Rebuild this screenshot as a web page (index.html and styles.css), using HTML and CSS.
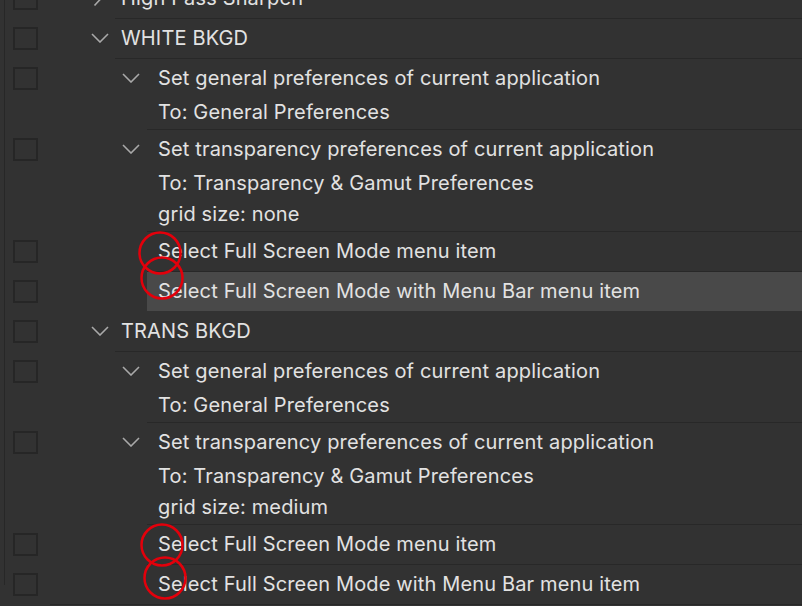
FILE: index.html
```html
<!DOCTYPE html>
<html>
<head>
<meta charset="utf-8">
<link rel="stylesheet" href="styles.css">
</head>
<body>
<div class="panel">
  <div class="list">
    <div class="row">
      <div class="gutter"><span class="box"></span></div>
      <div class="body group">
        <div class="title"><span class="chev right"><svg width="10" height="18" viewBox="0 0 10 18"><path d="M1.5 1.5 L8.5 9 L1.5 16.5" fill="none" stroke="#a9a9a9" stroke-width="1.6"/></svg></span><span class="text">High Pass Sharpen</span></div>
      </div>
    </div>

    <div class="row">
      <div class="gutter"><span class="box"></span></div>
      <div class="body group">
        <div class="title"><span class="chev"><svg width="18" height="10" viewBox="0 0 18 10"><path d="M1 1 L9 9 L17 1" fill="none" stroke="#a9a9a9" stroke-width="1.6"/></svg></span><span class="text">WHITE BKGD</span></div>
      </div>
    </div>

    <div class="row">
      <div class="gutter"><span class="box"></span></div>
      <div class="body action">
        <div class="title"><span class="chev"><svg width="18" height="10" viewBox="0 0 18 10"><path d="M1 1 L9 9 L17 1" fill="none" stroke="#a9a9a9" stroke-width="1.6"/></svg></span><span class="text">Set general preferences of current application</span></div>
        <div class="detail">To: General Preferences</div>
      </div>
    </div>

    <div class="row">
      <div class="gutter"><span class="box"></span></div>
      <div class="body action">
        <div class="title"><span class="chev"><svg width="18" height="10" viewBox="0 0 18 10"><path d="M1 1 L9 9 L17 1" fill="none" stroke="#a9a9a9" stroke-width="1.6"/></svg></span><span class="text">Set transparency preferences of current application</span></div>
        <div class="detail">To: Transparency &amp; Gamut Preferences</div>
        <div class="detail">grid size: none</div>
      </div>
    </div>

    <div class="row">
      <div class="gutter"><span class="box"></span></div>
      <div class="body action">
        <div class="title plain"><span class="text">Select Full Screen Mode menu item</span></div>
      </div>
    </div>

    <div class="row">
      <div class="gutter"><span class="box"></span></div>
      <div class="body action selected">
        <div class="title plain"><span class="text">Select Full Screen Mode with Menu Bar menu item</span></div>
      </div>
    </div>

    <div class="row">
      <div class="gutter"><span class="box"></span></div>
      <div class="body group">
        <div class="title"><span class="chev"><svg width="18" height="10" viewBox="0 0 18 10"><path d="M1 1 L9 9 L17 1" fill="none" stroke="#a9a9a9" stroke-width="1.6"/></svg></span><span class="text">TRANS BKGD</span></div>
      </div>
    </div>

    <div class="row">
      <div class="gutter"><span class="box"></span></div>
      <div class="body action">
        <div class="title"><span class="chev"><svg width="18" height="10" viewBox="0 0 18 10"><path d="M1 1 L9 9 L17 1" fill="none" stroke="#a9a9a9" stroke-width="1.6"/></svg></span><span class="text">Set general preferences of current application</span></div>
        <div class="detail">To: General Preferences</div>
      </div>
    </div>

    <div class="row">
      <div class="gutter"><span class="box"></span></div>
      <div class="body action">
        <div class="title"><span class="chev"><svg width="18" height="10" viewBox="0 0 18 10"><path d="M1 1 L9 9 L17 1" fill="none" stroke="#a9a9a9" stroke-width="1.6"/></svg></span><span class="text">Set transparency preferences of current application</span></div>
        <div class="detail">To: Transparency &amp; Gamut Preferences</div>
        <div class="detail">grid size: medium</div>
      </div>
    </div>

    <div class="row">
      <div class="gutter"><span class="box"></span></div>
      <div class="body action">
        <div class="title plain"><span class="text">Select Full Screen Mode menu item</span></div>
      </div>
    </div>

    <div class="row">
      <div class="gutter"><span class="box"></span></div>
      <div class="body action last">
        <div class="title plain"><span class="text">Select Full Screen Mode with Menu Bar menu item</span></div>
      </div>
    </div>
    <div class="next-set"></div>
  </div>

  <svg class="marks" width="802" height="606" viewBox="0 0 802 606">
    <g fill="none" stroke="#e3000b" stroke-width="2.5">
      <circle cx="160" cy="253" r="20.5"/>
      <circle cx="162" cy="278" r="20.5"/>
      <circle cx="162" cy="545" r="20.5"/>
      <circle cx="165" cy="578" r="20.5"/>
    </g>
  </svg>
</div>
</body>
</html>
```
FILE: styles.css
```css
*, *::before, *::after {
  box-sizing: border-box;
}
html, body {
  margin: 0;
  padding: 0;
  background: #323232;
  overflow: hidden;
  height: 606px;
}
.panel {
  margin-left: 4px;
  border-left: 1px solid #272727;
  height: 606px;
  font-family: Inter, "Liberation Sans", sans-serif;
  font-size: 20px;
  letter-spacing: 0.15px;
  color: #e2e2e2;
}
.list {
  margin-top: -21px;
}
.row {
  display: flex;
}
.gutter {
  width: 40px;
  flex: none;
  padding-top: 8px;
  padding-left: 8px;
}
.box {
  display: block;
  width: 25px;
  height: 23px;
  border: 2px solid #262626;
}
.body {
  flex: 1;
  border-bottom: 1px solid #282828;
  padding-bottom: 1px;
}
.body.group {
  margin-left: 70px;
}
.body.action {
  margin-left: 102px;
}
.body.selected {
  background: #494949;
  border-bottom-color: #323232;
}
.body.last {
  border-bottom: none;
}
.next-set {
  margin-left: 45px;
  border-top: 1px solid #282828;
  height: 20px;
}
.title {
  display: flex;
  align-items: center;
  height: 38px;
  white-space: nowrap;
}
.chev {
  display: flex;
  align-items: center;
  flex: none;
}
.group .chev {
  width: 30px;
  margin-left: -24px;
}
.group .chev.right {
  width: 28px;
  margin-left: -22px;
}
.action .chev {
  width: 36px;
  margin-left: -25px;
}
.title.plain {
  padding-left: 11px;
}
.detail {
  height: 31px;
  line-height: 31px;
  padding-left: 11px;
  white-space: nowrap;
}
.marks {
  position: absolute;
  left: 0;
  top: 0;
  pointer-events: none;
}
```
